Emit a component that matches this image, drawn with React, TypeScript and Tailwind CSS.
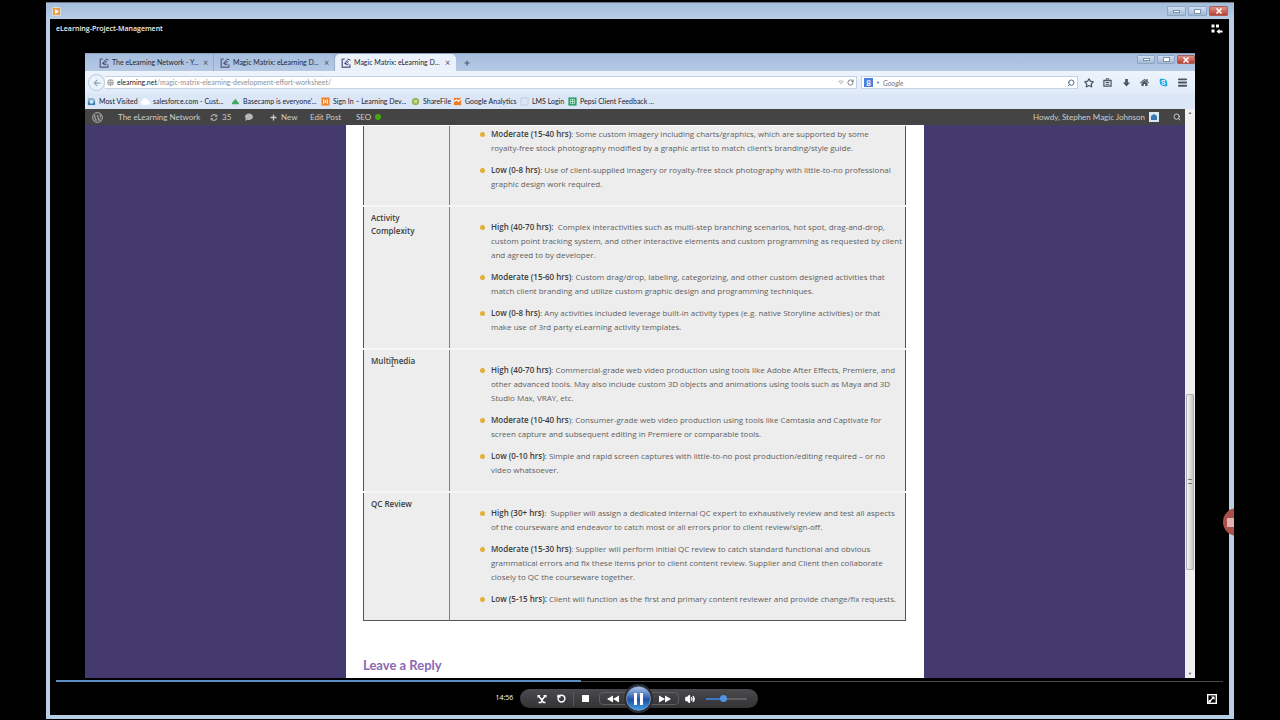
import type { ReactNode } from "react"
import {
  FaWordpressSimple,
  FaSyncAlt,
  FaComment,
  FaPlus,
  FaCloud,
  FaGlobe,
  FaHome,
  FaSkype,
  FaArrowLeft,
} from "react-icons/fa"
import { Search, Star, Menu, RotateCw, RotateCcw, Volume2 } from "lucide-react"

type Level = {
  label: string
  lines: string[]
}

type MatrixRow = {
  title: string[]
  levels: Level[]
}

type Bookmark = {
  name: string
  width: string
  icon: ReactNode
}

const rows: MatrixRow[] = [
  {
    title: [],
    levels: [
      {
        label: "Moderate (15-40 hrs)",
        lines: [
          ": Some custom imagery including charts/graphics, which are supported by some",
          "royalty-free stock photography modified by a graphic artist to match client’s branding/style guide.",
        ],
      },
      {
        label: "Low (0-8 hrs)",
        lines: [
          ": Use of client-supplied imagery or royalty-free stock photography with little-to-no professional",
          "graphic design work required.",
        ],
      },
    ],
  },
  {
    title: ["Activity", "Complexity"],
    levels: [
      {
        label: "High (40-70 hrs):",
        lines: [
          "\u00a0 Complex interactivities such as multi-step branching scenarios, hot spot, drag-and-drop,",
          "custom point tracking system, and other interactive elements and custom programming as requested by client",
          "and agreed to by developer.",
        ],
      },
      {
        label: "Moderate (15-60 hrs)",
        lines: [
          ": Custom drag/drop, labeling, categorizing, and other custom designed activities that",
          "match client branding and utilize custom graphic design and programming techniques.",
        ],
      },
      {
        label: "Low (0-8 hrs)",
        lines: [
          ": Any activities included leverage built-in activity types (e.g. native Storyline activities) or that",
          "make use of 3rd party eLearning activity templates.",
        ],
      },
    ],
  },
  {
    title: ["Multimedia"],
    levels: [
      {
        label: "High (40-70 hrs)",
        lines: [
          ": Commercial-grade web video production using tools like Adobe After Effects, Premiere, and",
          "other advanced tools. May also include custom 3D objects and animations using tools such as Maya and 3D",
          "Studio Max, VRAY, etc.",
        ],
      },
      {
        label: "Moderate (10-40 hrs",
        lines: [
          "): Consumer-grade web video production using tools like Camtasia and Captivate for",
          "screen capture and subsequent editing in Premiere or comparable tools.",
        ],
      },
      {
        label: "Low (0-10 hrs)",
        lines: [
          ": Simple and rapid screen captures with little-to-no post production/editing required – or no",
          "video whatsoever.",
        ],
      },
    ],
  },
  {
    title: ["QC Review"],
    levels: [
      {
        label: "High (30+ hrs)",
        lines: [
          ":\u00a0 Supplier will assign a dedicated internal QC expert to exhaustively review and test all aspects",
          "of the courseware and endeavor to catch most or all errors prior to client review/sign-off.",
        ],
      },
      {
        label: "Moderate (15-30 hrs)",
        lines: [
          ": Supplier will perform initial QC review to catch standard functional and obvious",
          "grammatical errors and fix these items prior to client content review. Supplier and Client then collaborate",
          "closely to QC the courseware together.",
        ],
      },
      {
        label: "Low (5-15 hrs):",
        lines: [" Client will function as the first and primary content reviewer and provide change/fix requests."],
      },
    ],
  },
]

const bookmarks: Bookmark[] = [
  {
    name: "Most Visited",
    width: "w-[54px]",
    icon: (
      <svg viewBox="0 0 10 10" className="w-full h-full">
        <path d="M1 1h6l2 2v6H1z" fill="#8db9d6" />
        <path d="M1 5h8v4H1z" fill="#3d87b5" />
        <circle cx="5" cy="5.500" r="2" fill="#d7ecf7" />
      </svg>
    ),
  },
  { name: "salesforce.com - Cust...", width: "w-[90px]", icon: <FaCloud className="w-full h-full text-white" /> },
  {
    name: "Basecamp is everyone'...",
    width: "w-[90px]",
    icon: (
      <svg viewBox="0 0 10 10" className="w-full h-full">
        <path d="M1 8C1 5 3 5 4 3c1-2 2 0 3 2 1 1 2 1 2 3z" fill="#3faa62" />
      </svg>
    ),
  },
  {
    name: "Sign In – Learning Dev...",
    width: "w-[90px]",
    icon: (
      <svg viewBox="0 0 10 10" className="w-full h-full">
        <rect x="0.500" y="0.500" width="9" height="9" fill="#ef8426" />
        <path d="M3 2.500v5M7 2.500v5M5 3.500v3" stroke="#fff" strokeWidth="1.200" />
      </svg>
    ),
  },
  {
    name: "ShareFile",
    width: "w-[42px]",
    icon: (
      <svg viewBox="0 0 10 10" className="w-full h-full">
        <circle cx="5" cy="5" r="4" fill="#8fae3a" />
        <path d="M3 3.500h4M3 5h4M3 6.500h4" stroke="#eef5d5" strokeWidth="0.800" />
      </svg>
    ),
  },
  {
    name: "Google Analytics",
    width: "w-[67px]",
    icon: (
      <svg viewBox="0 0 10 10" className="w-full h-full">
        <path d="M1 1h8v8H1z" fill="#f07a25" />
        <path d="M1 5l3-2 2 2 3-3" stroke="#fff" fill="none" strokeWidth="1.200" />
      </svg>
    ),
  },
  {
    name: "LMS Login",
    width: "w-[48px]",
    icon: (
      <svg viewBox="0 0 10 10" className="w-full h-full">
        <rect x="1" y="1" width="8" height="8" fill="none" stroke="#8d9bb0" strokeWidth="0.700" strokeDasharray="1 1" />
      </svg>
    ),
  },
  {
    name: "Pepsi Client Feedback ...",
    width: "w-[90px]",
    icon: (
      <svg viewBox="0 0 10 10" className="w-full h-full">
        <rect x="0.500" y="0.500" width="9" height="9" fill="#169a5a" />
        <path d="M2.500 2.500h5v5h-5zM2.500 5h5M5 2.500v5" stroke="#e5f7ec" fill="none" strokeWidth="0.800" />
      </svg>
    ),
  },
]

const tabs = ["The eLearning Network - Y...", "Magic Matrix: eLearning D...", "Magic Matrix: eLearning D..."]

const SiteIcon = () => (
  <svg viewBox="0 0 10 10" className="w-[10px] h-[10px] shrink-0">
    <path d="M0.500 0.500h4L3 2H2v6.500h6V7l1.500-1v4h-9z" fill="#6a6d92" />
    <path d="M3.500 5.500c3 0 4-1.500 3.500-2.300-.8-1-3 .3-2.800 2.300.2 1.500 2 1.500 3.500.5" stroke="#39406e" fill="none" />
    <path d="M6.500 1l3 1" stroke="#39406e" />
  </svg>
)

const WindowButtons = ({ size }: { size: string }) => (
  <div className="flex gap-[2px]">
    <button aria-label="Minimize" className={`${size} flex items-center justify-center rounded-[1px] border border-[#8fa5c5] bg-linear-to-b from-[#cfdeef] to-[#a3bad6]`}>
      <span className="w-[7px] h-[3px] border border-[#7d8ea8] bg-white" />
    </button>
    <button aria-label="Restore" className={`${size} flex items-center justify-center rounded-[1px] border border-[#8fa5c5] bg-linear-to-b from-[#cfdeef] to-[#a3bad6]`}>
      <span className="w-[7px] h-[5px] border border-[#7d8ea8] bg-white" />
    </button>
    <button aria-label="Close" className={`${size} flex items-center justify-center rounded-[1px] border border-[#a8605f] bg-linear-to-b from-[#dc9188] to-[#bd3c30]`}>
      <svg viewBox="0 0 8 6" className="w-[8px] h-[6px]">
        <path d="M1.500 0.500l5 5M6.500 0.500l-5 5" stroke="#fff" strokeWidth="1.600" />
      </svg>
    </button>
  </div>
)

const TabStrip = () => (
  <div className="relative flex h-[17px] shrink-0 bg-linear-to-b from-[#a5bddd] to-[#b5c9e4] pl-[8px]">
    {tabs.map((tab, index) => (
      <div
        key={index}
        className={`flex items-center w-[121px] pl-[6px] text-[7px] text-[#20293a] whitespace-nowrap ${
          index === 2 ? "bg-[#eaf1fb] rounded-t-[5px]" : "border-r border-[#94abcb]"
        }`}
      >
        <SiteIcon />
        <span className="w-[94px] pl-[3px] overflow-hidden">{tab}</span>
        <button aria-label="Close tab" className="text-[9px] leading-none text-[#4b5566]">×</button>
      </div>
    ))}
    <button aria-label="New tab" className="flex items-center pl-[8px] text-[#4b5a75]">
      <FaPlus className="w-[6px] h-[6px]" />
    </button>
    <div className="absolute top-px right-0">
      <WindowButtons size="w-[18px] h-[9px]" />
    </div>
  </div>
)

const AddressBar = () => (
  <div className="flex items-center h-[23px] shrink-0 pl-[3px] pr-[7px] bg-linear-to-b from-[#eef4fc] to-[#e0ebf9]">
    <button aria-label="Back" className="flex items-center justify-center w-[17px] h-[17px] rounded-full border border-[#b9c8dc] bg-[#eaf2fb] text-[#93a5bd]">
      <FaArrowLeft className="w-[8px] h-[8px]" />
    </button>
    <div className="flex flex-1 items-center h-[13px] bg-white border border-[#c4d2e5] border-l-0 px-[2px] gap-[3px]">
      <FaGlobe className="w-[7px] h-[7px] text-[#9b9b9b]" />
      <span className="flex-1 text-[7px] text-[#8b9097] whitespace-nowrap">
        <span className="text-[#20242a]">elearning.net</span>/magic-matrix-elearning-development-effort-worksheet/
      </span>
      <svg viewBox="0 0 8 6" className="w-[6px] h-[5px]">
        <path d="M1 1h6L4 5z" fill="none" stroke="#a5abb3" />
      </svg>
      <RotateCw className="w-[7px] h-[7px] text-[#6d747d]" strokeWidth={3} />
    </div>
    <label className="flex items-center w-[217px] h-[13px] ml-[4px] bg-white border border-[#c4d2e5] px-[2px]">
      <span className="flex items-center justify-center w-[9px] h-[9px] bg-[#4a7fe0] text-white text-[8px] font-bold leading-none">8</span>
      <span className="text-[4px] text-[#60656d] px-[3px]">▼</span>
      <input aria-label="Search Google" placeholder="Google" className="flex-1 min-w-0 text-[7px] leading-[10px] italic placeholder:text-[#6e747c] outline-none" />
      <Search className="w-[8px] h-[8px] -scale-x-100 text-[#4a6a8a]" strokeWidth={3} />
    </label>
    <div className="flex items-center justify-between w-[104px] ml-[6px] text-[#4b5562]">
      <Star className="w-[10px] h-[10px]" strokeWidth={3} />
      <svg viewBox="0 0 10 10" className="w-[9px] h-[9px]">
        <path d="M1 2.500h8v6.500H1z" fill="none" stroke="currentColor" strokeWidth="1.300" />
        <path d="M3.500 2V0.800h3V2M1 3h8M3 5h4M3 7h4" fill="none" stroke="currentColor" strokeWidth="1.100" />
      </svg>
      <svg viewBox="0 0 10 10" className="w-[9px] h-[9px]">
        <path d="M3.500 1h3v4H9L5 9.500 1 5h2.500z" fill="currentColor" />
      </svg>
      <FaHome className="w-[9px] h-[9px]" />
      <FaSkype className="w-[9px] h-[9px] text-[#1fa9e0]" />
      <Menu className="w-[11px] h-[11px]" strokeWidth={4} />
    </div>
  </div>
)

const BookmarksBar = () => (
  <div className="flex items-center h-[15px] shrink-0 pl-[2px] bg-[#dbe7f7] text-[7px] text-[#1c222c]">
    {bookmarks.map((bookmark) => (
      <a key={bookmark.name} href="#" className={`flex items-center gap-[3px] shrink-0 whitespace-nowrap ${bookmark.width}`}>
        <span className="w-[9px] h-[9px] shrink-0">{bookmark.icon}</span>
        {bookmark.name}
      </a>
    ))}
  </div>
)

const AdminBar = () => (
  <div className="flex items-center h-[16px] shrink-0 bg-[#444444] pl-[7px] pr-px text-[8px] text-[#cccccc] whitespace-nowrap">
    <span className="flex items-center justify-center w-[11px] h-[11px] rounded-full border border-[#a0a0a0]">
      <FaWordpressSimple className="w-[9px] h-[9px] text-[#a8a8a8]" />
    </span>
    <span className="w-[107px] pl-[15px]">The eLearning Network</span>
    <span className="flex items-center gap-[4px] w-[35px]">
      <FaSyncAlt className="w-[8px] h-[7px] text-[#a8a8a8]" />
      35
    </span>
    <FaComment className="w-[8px] h-[8px] text-[#b8b8b8]" />
    <span className="flex items-center gap-[4px] w-[56px] pl-[17px]">
      <FaPlus className="w-[7px] h-[7px]" />
      New
    </span>
    <span className="w-[47px] pl-px">Edit Post</span>
    <span>SEO</span>
    <span className="w-[6px] h-[6px] ml-[4px] rounded-full bg-[#45a80f]" />
    <span className="ml-auto">Howdy, Stephen Magic Johnson</span>
    <svg viewBox="0 0 10 10" className="w-[10px] h-[10px] ml-[4px] mr-[14px]">
      <rect width="10" height="10" fill="#d9e8f2" />
      <path d="M2 4l3-2 3 2v4H2z" fill="#3b78b0" />
    </svg>
    <Search className="w-[8px] h-[8px] mr-[3px]" strokeWidth={3} />
  </div>
)

const LevelItem = ({ level }: { level: Level }) => (
  <li className="flex gap-[6px]">
    <span className="w-[5px] h-[5px] mt-[5px] shrink-0 rounded-full bg-[#e3b13a]" />
    <p>
      <strong className="font-semibold text-[#3c3c3c]">{level.label}</strong>
      {level.lines.map((line, index) => (
        <span key={index}>
          {line}
          {index < level.lines.length - 1 && <br />}
        </span>
      ))}
    </p>
  </li>
)

const MatrixTable = () => (
  <table className="w-full table-fixed border-collapse border border-t-0 border-[#555555] bg-[#ededed] text-[8px] leading-[14px] text-[#5e5e5e] whitespace-nowrap font-['Open_Sans',sans-serif]">
    <tbody>
      {rows.map((row, index) => (
        <tr key={index} className={index === 0 ? "" : "border-t-2 border-[#f6f6f6]"}>
          <th scope="row" className="w-[86px] pt-[4px] pl-[7px] align-top text-left font-semibold leading-[13px] text-[#3c3c3c] border-r border-[#808080]">
            {row.title.map((word) => (
              <div key={word}>{word}</div>
            ))}
          </th>
          <td className={index === 0 ? "pt-px pb-[14px] pl-[30px]" : "pt-[13px] pb-[14px] pl-[30px]"}>
            <ul className="flex flex-col gap-2">
              {row.levels.map((level) => (
                <LevelItem key={level.label} level={level} />
              ))}
            </ul>
          </td>
        </tr>
      ))}
    </tbody>
  </table>
)

const ScrollBar = () => (
  <div className="relative w-[10px] shrink-0 bg-[#f0f0f0] text-[4px] text-[#555555]">
    <span className="absolute top-[1px] left-[3px]">▲</span>
    <div className="absolute top-[50%] h-[31%] inset-x-px flex items-center justify-center border border-[#b0b0b0] rounded-[1px] bg-linear-to-r from-[#f5f5f5] to-[#c6c6ca]">
      <span className="w-[4px] h-[5px] border-y border-[#777777]" />
    </div>
    <span className="absolute bottom-[1px] left-[3px]">▼</span>
  </div>
)

const Browser = () => (
  <div className="flex flex-col flex-1 min-h-0 ml-[35px] mr-[34px] overflow-hidden border-t border-[#8ba0bd] font-['Lato',sans-serif]">
    <TabStrip />
    <AddressBar />
    <BookmarksBar />
    <div className="flex flex-1 min-h-0">
      <div className="flex flex-col flex-1 min-w-0 bg-[#443a6e]">
        <AdminBar />
        <div className="flex-1 min-h-0 w-[578px] mx-auto pl-[17px] pr-[18px] pt-px overflow-hidden bg-white">
          <MatrixTable />
          <h3 className="mt-[34px] text-[13px] leading-[20px] font-bold text-[#8a68b4]">
            Leave a Reply
          </h3>
        </div>
      </div>
      <ScrollBar />
    </div>
  </div>
)

const PlayerControls = () => (
  <div className="relative flex items-center justify-center h-[32px] shrink-0 pr-[26px] pb-px text-white">
    <span className="w-[24px] text-[7px] whitespace-nowrap">14:56</span>
    <div className="flex items-center w-[238px] h-[19px] rounded-full bg-linear-to-b from-[#4b4b4e] to-[#333336] pl-[17px]">
      <button aria-label="Shuffle">
        <svg viewBox="0 0 10 10" className="w-[10px] h-[10px]">
          <path d="M1.500 2L5 6l3-4M1.500 8.500H4L5 6.500 6.500 8.500h2" stroke="#fff" strokeWidth="1.500" fill="none" />
          <path d="M6 1h3.500v3zM0.500 1h3L0.500 4z" fill="#fff" />
        </svg>
      </button>
      <button aria-label="Repeat" className="ml-[10px]">
        <RotateCcw className="w-[9px] h-[9px]" strokeWidth={4} />
      </button>
      <button aria-label="Stop" className="flex items-center h-[14px] ml-[7px] pl-[8px] border-l border-[#5a5a5d]">
        <span className="w-[7px] h-[7px] bg-white" />
      </button>
      <div className="flex items-center justify-between w-[80px] h-[13px] ml-[10px] px-[7px] rounded-[4px] border border-[#5f5f63]">
        <button aria-label="Rewind">
          <svg viewBox="0 0 12 8" className="w-[12px] h-[8px]">
            <path d="M6 0.500v7L0 4zM12 0.500v7L6 4z" fill="#fff" />
          </svg>
        </button>
        <button aria-label="Pause" className="flex items-center justify-center gap-[3px] w-[25px] h-[25px] shrink-0 rounded-full border border-[#8797b5] bg-linear-to-b from-[#a9c3ec] via-[#1c51a8] via-55% to-[#3f9fe8] outline-2 outline-[#29303d]">
          <span className="w-[3px] h-[12px] bg-white" />
          <span className="w-[3px] h-[12px] bg-white" />
        </button>
        <button aria-label="Fast forward">
          <svg viewBox="0 0 12 8" className="w-[12px] h-[8px]">
            <path d="M0 0.500v7L6 4zM6 0.500v7l6-3.500z" fill="#fff" />
          </svg>
        </button>
      </div>
      <button aria-label="Mute" className="ml-[6px]">
        <Volume2 className="w-[10px] h-[10px]" fill="#fff" strokeWidth={3} />
      </button>
      <input
        type="range"
        aria-label="Volume"
        defaultValue={44}
        className="w-[41px] h-[8px] ml-[11px] appearance-none bg-[linear-gradient(to_right,#3d78c4_42%,#606064_42%)] bg-[length:100%_2px] bg-center bg-no-repeat [&::-webkit-slider-thumb]:appearance-none [&::-webkit-slider-thumb]:w-[7px] [&::-webkit-slider-thumb]:h-[7px] [&::-webkit-slider-thumb]:rounded-full [&::-webkit-slider-thumb]:bg-[#4f93e2]"
      />
    </div>
    <button aria-label="Full screen" className="absolute right-[12px] top-[11px]">
      <svg viewBox="0 0 10 10" className="w-[10px] h-[10px]">
        <rect x="0.700" y="0.700" width="8.600" height="8.600" fill="none" stroke="#fff" strokeWidth="1.400" />
        <path d="M4 2.500h3.500V6zM1 9l1-3 2 0 0 2z" fill="#fff" />
        <path d="M3.500 6.500l3-3" stroke="#fff" strokeWidth="1.300" />
      </svg>
    </button>
  </div>
)

const App = () => {
  return (
    <div className="h-screen bg-black px-[46px] pt-[2px] pb-px font-['Open_Sans',sans-serif]">
      <div className="relative flex flex-col h-full bg-[#b9cfe8] pl-[4px] pr-[5px] pb-[4px] border-t border-[#6d7684]">
        <div className="flex items-center justify-between h-[16px] shrink-0 -ml-[4px] -mr-[5px] pl-[6px] pr-[6px] bg-linear-to-b from-[#a3bddc] to-[#b7cde8]">
          <svg viewBox="0 0 10 10" className="w-[9px] h-[9px]">
            <rect x="0.500" y="0.500" width="9" height="9" rx="1" fill="#eb9a3c" stroke="#dfe6ee" />
            <path d="M3.500 2.200v5.600L8 5z" fill="#fff" />
          </svg>
          <WindowButtons size="w-[19px] h-[10px]" />
        </div>
        <div className="flex flex-col flex-1 min-h-0 bg-black">
          <div className="flex justify-between h-[34px] shrink-0 pl-[6px] pr-[6px] pt-[4px] text-[7px] font-semibold text-[#f0f0f0]">
            <h1 className="leading-[11px]">eLearning-Project-Management</h1>
            <button aria-label="Switch to library" className="h-[12px]">
              <svg viewBox="0 0 12 10" className="w-[12px] h-[10px]">
                <path d="M0.500 0.500h3v3h-3zM5 0.500h3v3H5zM0.500 5.500h3v3h-3zM5.500 7.500l3-2.500v1.500h3v2h-3V10z" fill="#fff" />
              </svg>
            </button>
          </div>
          <Browser />
          <div className="h-[5px] shrink-0 px-[6px] pt-[2px]">
            <div role="progressbar" aria-label="Playback position" aria-valuenow={45} className="h-[2px] border-b border-[#4a4a4a]">
              <div className="w-[45%] h-[2px] bg-[#5d8dbf]" />
            </div>
          </div>
          <PlayerControls />
        </div>
        {/* recorder handle, half outside the window */}
        <div className="absolute right-0 top-[505px] w-[11px] h-[28px] overflow-hidden">
          <div className="flex items-center w-[28px] h-[28px] pl-[4px] rounded-full bg-[#a9504b]">
            <div className="w-[8px] h-[9px] bg-[#e0b4b1]" />
          </div>
        </div>
      </div>
      {/* text cursor over the page */}
      <div className="absolute left-[391px] top-[357px] w-[3px] h-[10px] border-y border-[#777777] flex justify-center">
        <span className="w-px h-full bg-[#777777]" />
      </div>
    </div>
  )
}

export default App
